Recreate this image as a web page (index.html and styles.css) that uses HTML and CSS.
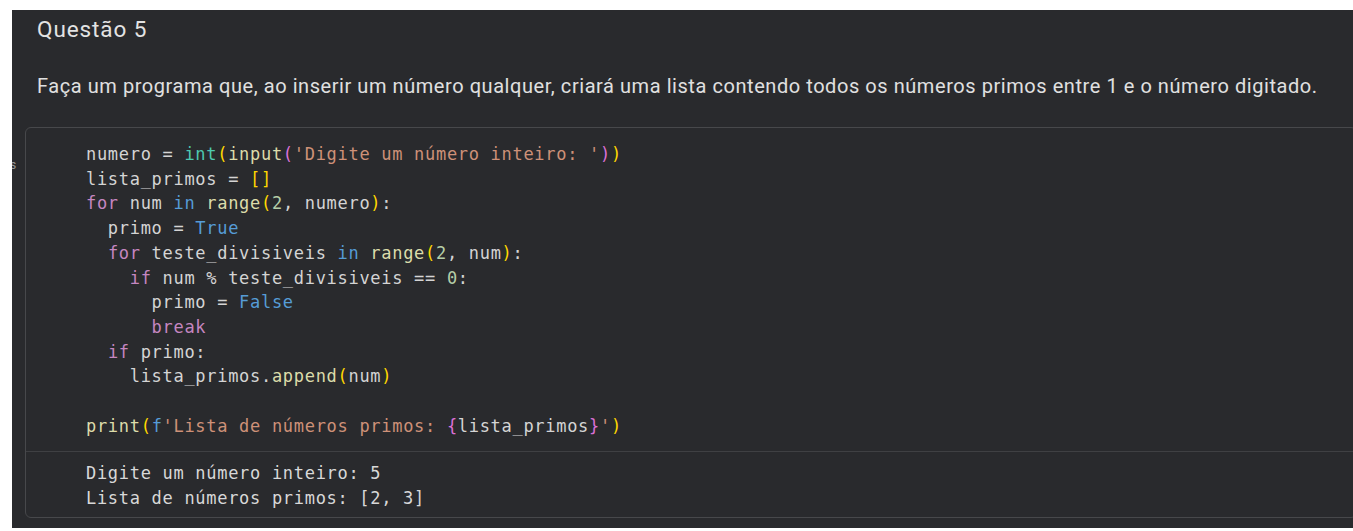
FILE: index.html
```html
<!DOCTYPE html>
<html lang="pt">
<head>
<meta charset="utf-8">
<title>Questão 5</title>
<link rel="stylesheet" href="styles.css">
</head>
<body>
<div class="panel">
  <span class="stray">s</span>
  <div class="title">Questão 5</div>
  <p class="desc">Faça um programa que, ao inserir um número qualquer, criará uma lista contendo todos os números primos entre 1 e o número digitado.</p>
  <div class="cell">
<pre class="code">numero = <span class="bi">int</span><span class="b1">(</span><span class="fn">input</span><span class="b2">(</span><span class="str">'Digite um número inteiro: '</span><span class="b2">)</span><span class="b1">)</span>
lista_primos = <span class="b1">[]</span>
<span class="kw">for</span> num <span class="ok">in</span> <span class="fn">range</span><span class="b1">(</span><span class="num">2</span>, numero<span class="b1">)</span>:
  primo = <span class="ok">True</span>
  <span class="kw">for</span> teste_divisiveis <span class="ok">in</span> <span class="fn">range</span><span class="b1">(</span><span class="num">2</span>, num<span class="b1">)</span>:
    <span class="kw">if</span> num % teste_divisiveis == <span class="num">0</span>:
      primo = <span class="ok">False</span>
      <span class="kw">break</span>
  <span class="kw">if</span> primo:
    lista_primos.<span class="fn">append</span><span class="b1">(</span>num<span class="b1">)</span>

<span class="fn">print</span><span class="b1">(</span><span class="ok">f</span><span class="str">'Lista de números primos: </span><span class="b2">{</span>lista_primos<span class="b2">}</span><span class="str">'</span><span class="b1">)</span></pre>
    <pre class="output">Digite um número inteiro: 5
Lista de números primos: [2, 3]</pre>
  </div>
</div>
</body>
</html>
```
FILE: styles.css
```css
html, body {
  margin: 0;
  padding: 0;
  background: #ffffff;
  height: 531px;
  overflow: hidden;
}

.panel {
  position: relative;
  margin: 10px 0 0 12px;
  padding: 7px 0 10px 13px;
  background: #292a2d;
  overflow: hidden;
  font-family: Roboto, "Liberation Sans", sans-serif;
  color: #e3e3e3;
}

.stray {
  position: absolute;
  left: -2px;
  top: 148px;
  font-size: 12px;
  color: #9a9a9a;
}

.title {
  padding-left: 12px;
  font-size: 22.5px;
  line-height: 24px;
  letter-spacing: 0.9px;
}

.desc {
  margin: 33px 0 29px;
  padding-left: 12px;
  font-size: 20px;
  line-height: 24px;
  white-space: nowrap;
  letter-spacing: 0.56px;
  color: #e0e0e0;
}

.cell {
  width: 1330px;
  border: 1px solid #47484b;
  border-radius: 6px;
  background: #292a2d;
}

.code, .output {
  margin: 0;
  font-family: "DejaVu Sans Mono", "Liberation Mono", monospace;
  font-size: 17px;
  letter-spacing: 0.7px;
  color: #d4d4d4;
}

.code {
  padding: 14px 0 13px 60px;
  line-height: 24.7px;
  border-bottom: 1px solid #3f4043;
}

.output {
  padding: 9px 0 7px 60px;
  line-height: 24.3px;
  color: #d8d8d8;
}

.kw { color: #c586c0; }
.ok { color: #569cd6; }
.fn { color: #dcdcaa; }
.bi { color: #4ec9b0; }
.str { color: #ce9178; }
.num { color: #b5cea8; }
.b1 { color: #ffd700; }
.b2 { color: #da70d6; }
```
